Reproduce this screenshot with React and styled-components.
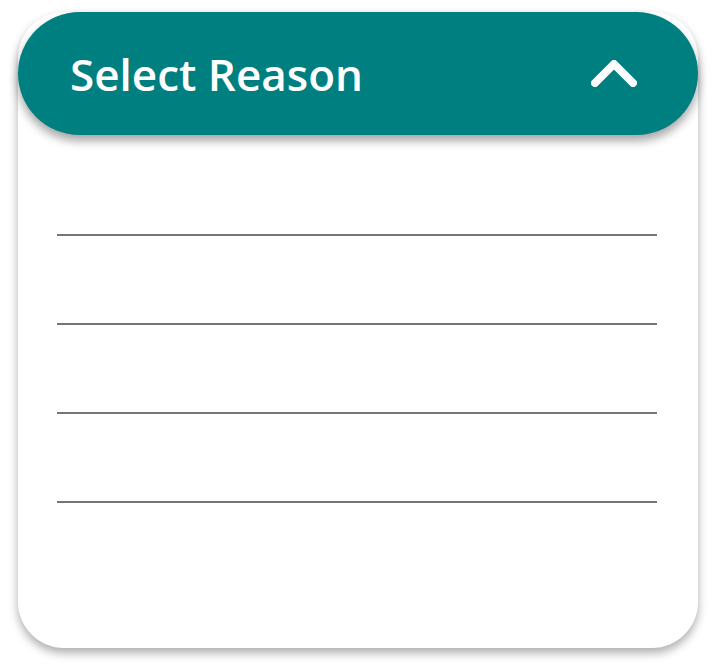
import React from "react";
import styled, { createGlobalStyle } from "styled-components";

const Global = createGlobalStyle`
  html, body { margin: 0; padding: 0; background: #ffffff; }
  body { font-family: "Open Sans", "Noto Sans", sans-serif; }
`;

const Page = styled.div`
  width: 716px;
  height: 672px;
  box-sizing: border-box;
  padding: 12px 18px 0 18px;
`;

const Card = styled.div`
  width: 680px;
  height: 636px;
  background: #ffffff;
  border-radius: 46px;
  box-shadow: 0 5px 10px rgba(0, 0, 0, 0.32);
  display: flex;
  flex-direction: column;
`;

const Header = styled.button`
  all: unset;
  box-sizing: border-box;
  height: 123px;
  border-radius: 62px;
  background: #007f80;
  box-shadow: 0 6px 10px rgba(0, 0, 0, 0.35);
  display: flex;
  align-items: center;
  justify-content: space-between;
  padding: 0 61px 0 52px;
  cursor: pointer;
`;

const Title = styled.span`
  color: #ffffff;
  font-family: "Open Sans", sans-serif;
  font-weight: 600;
  font-size: 44px;
  letter-spacing: 0;
  line-height: 1;
`;

const List = styled.ul`
  list-style: none;
  margin: 0;
  padding: 12px 41px 0 39px;
`;

const Item = styled.li`
  height: 87px;
  border-bottom: 2px solid #757575;
`;

const Chevron = () => (
  <svg width="46" height="27" viewBox="0 0 46 27" fill="none">
    <path
      d="M4 23 L23 4 L42 23"
      stroke="#ffffff"
      strokeWidth="8"
      strokeLinecap="round"
      strokeLinejoin="round"
    />
  </svg>
);

export default function App() {
  return (
    <>
      <Global />
      <Page>
        <Card>
          <Header>
            <Title>Select Reason</Title>
            <Chevron />
          </Header>
          <List>
            <Item />
            <Item />
            <Item />
            <Item />
          </List>
        </Card>
      </Page>
    </>
  );
}
